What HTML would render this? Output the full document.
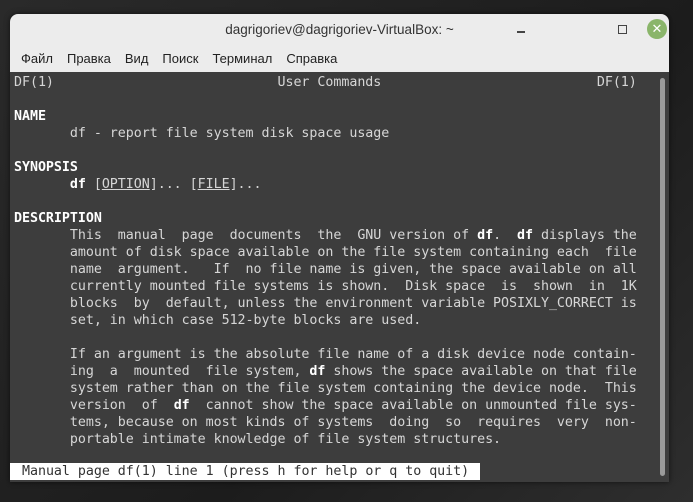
<!DOCTYPE html><html><head><meta charset="utf-8"><style>
body{margin:0;width:693px;height:502px;overflow:hidden;background:linear-gradient(135deg,#2a2a2a,#1c1c1c 60%,#2e2e2e);font-family:"Liberation Sans","DejaVu Sans",sans-serif}
.win{position:absolute;left:10px;top:14px;width:659px;height:468px;background:#ececec;border-radius:8px 8px 0 0;overflow:hidden;box-shadow:0 0 6px rgba(0,0,0,.6)}
.title{position:absolute;top:0;left:0;right:0;height:32px;text-align:center;line-height:32px;font-size:13.5px;color:#333}
.menu{position:absolute;top:32px;left:0;height:26px;font-size:13px;color:#222;line-height:26px}
.menu span{margin-left:11px;margin-right:3px}
.term{position:absolute;top:58px;left:0;width:659px;height:410px;background:#3d3d3d}
pre{margin:0;position:absolute;left:4px;top:2px;font-family:"DejaVu Sans Mono","Liberation Mono",monospace;font-size:13.33px;line-height:17px;color:#d6d6d6;letter-spacing:-0.04px}
b{color:#fff}
u{text-decoration:underline}
.st{position:absolute;left:0;top:391px;width:470px;height:17px;background:#fff}
.st pre{color:#333;left:12px;top:0}
.sb{position:absolute;right:4px;top:6px;width:5px;height:398px;background:#9a9a9a;border-radius:3px}
</style></head><body><div class="win">
<div class="title">dagrigoriev@dagrigoriev-VirtualBox: ~</div>
<div style="position:absolute;left:507px;top:17px;width:8px;height:1.5px;background:#444"></div>
<div style="position:absolute;left:608px;top:11px;width:7px;height:7px;border:1px solid #444"></div>
<div style="position:absolute;left:637px;top:5px;width:20px;height:20px;border-radius:50%;background:#8ab56a;color:#fff;font-size:13px;text-align:center;line-height:20px">✕</div>
<div class="menu"><span>Файл</span><span>Правка</span><span>Вид</span><span>Поиск</span><span>Терминал</span><span>Справка</span></div>
<div class="term"><div class="sb"></div>
<pre>DF(1)                            User Commands                           DF(1)

<b>NAME</b>
       df - report file system disk space usage

<b>SYNOPSIS</b>
       <b>df</b> [<u>OPTION</u>]... [<u>FILE</u>]...

<b>DESCRIPTION</b>
       This  manual  page  documents  the  GNU version of <b>df</b>.  <b>df</b> displays the
       amount of disk space available on the file system containing each  file
       name  argument.   If  no file name is given, the space available on all
       currently mounted file systems is shown.  Disk space  is  shown  in  1K
       blocks  by  default, unless the environment variable POSIXLY_CORRECT is
       set, in which case 512-byte blocks are used.

       If an argument is the absolute file name of a disk device node contain‐
       ing  a  mounted  file system, <b>df</b> shows the space available on that file
       system rather than on the file system containing the device node.  This
       version  of  <b>df</b>  cannot show the space available on unmounted file sys‐
       tems, because on most kinds of systems  doing  so  requires  very  non‐
       portable intimate knowledge of file system structures.
</pre>
<div class="st"><pre>Manual page df(1) line 1 (press h for help or q to quit)</pre></div>
</div></div></body></html>
